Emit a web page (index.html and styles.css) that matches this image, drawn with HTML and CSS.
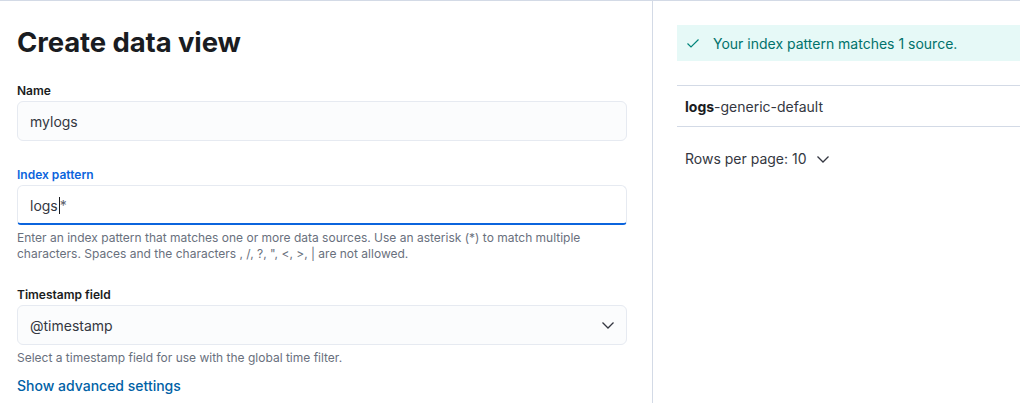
FILE: index.html
```html
<!DOCTYPE html>
<html>
<head>
<meta charset="utf-8">
<link rel="stylesheet" href="styles.css">
</head>
<body>
<div class="page">
  <section class="left">
    <h1 class="title">Create data view</h1>
    <div class="field">
      <label class="label">Name</label>
      <div class="input">mylogs</div>
    </div>
    <div class="field">
      <label class="label label-active">Index pattern</label>
      <div class="input input-focus">logs<span class="caret"></span><span class="ghost">*</span></div>
      <p class="help">Enter an index pattern that matches one or more data sources. Use an asterisk (*) to match multiple characters. Spaces and the characters , /, ?, ", &lt;, &gt;, | are not allowed.</p>
    </div>
    <div class="field">
      <label class="label">Timestamp field</label>
      <div class="input select">
        <span>@timestamp</span>
        <svg class="chev" width="16" height="16" viewBox="0 0 16 16"><path d="M2.5 5.5 L8 11 L13.5 5.5" fill="none" stroke="#343741" stroke-width="1.3"/></svg>
      </div>
      <p class="help">Select a timestamp field for use with the global time filter.</p>
    </div>
    <a class="link">Show advanced settings</a>
  </section>
  <section class="right">
    <div class="callout">
      <svg class="check" width="16" height="16" viewBox="0 0 16 16"><path d="M2.5 8.5 L6 12 L13.5 4.5" fill="none" stroke="#00857a" stroke-width="1.2"/></svg>
      <span>Your index pattern matches 1 source.</span>
    </div>
    <div class="table">
      <div class="row"><b>logs</b>-generic-default</div>
    </div>
    <div class="pager">
      <span>Rows per page: 10</span>
      <svg width="16" height="16" viewBox="0 0 16 16"><path d="M2.5 5.5 L8 11 L13.5 5.5" fill="none" stroke="#343741" stroke-width="1.3"/></svg>
    </div>
  </section>
</div>
</body>
</html>
```

FILE: styles.css
```css
* { box-sizing: border-box; }
html, body { margin: 0; padding: 0; background: #fff; }
body {
  font-family: Inter, "Noto Sans", sans-serif;
  color: #343741;
  font-size: 14px;
}
.page {
  display: flex;
  border-top: 1px solid #d3dae6;
  height: 403px;
}
.left {
  width: 653px;
  flex: none;
  border-right: 1px solid #d3dae6;
  padding: 21px 25px 0 17px;
}
.title {
  margin: 0;
  font-size: 27.5px;
  line-height: 40px;
  font-weight: 700;
  color: #1a1c21;
  letter-spacing: -0.1px;
}
.field { margin-top: 19px; }
.field + .field { margin-top: 24px; }
.label {
  display: block;
  font-size: 12px;
  line-height: 20px;
  font-weight: 600;
  color: #1a1c21;
}
.label-active { color: #0b64dd; }
.input {
  height: 40px;
  border: 1px solid #e6eaf1;
  border-radius: 6px;
  background: #fbfcfd;
  padding: 0 12px;
  display: flex;
  align-items: center;
  font-size: 14px;
  color: #343741;
}
.input-focus {
  background: #fff;
  border-bottom: 2px solid #0b64dd;
  border-radius: 6px 6px 4px 4px;
  padding-top: 1px;
}
.caret {
  display: inline-block;
  width: 1px;
  height: 17px;
  background: #1a1c21;
  margin: 0 0 0 1px;
}
.ghost { color: #5a606b; }
.select { justify-content: space-between; padding-right: 10px; }
.chev { flex: none; }
.help {
  margin: 5px 0 0;
  font-size: 12px;
  line-height: 15.5px;
  color: #69707d;
}
.link {
  display: block;
  margin-top: 10px;
  font-size: 14px;
  line-height: 20px;
  font-weight: 500;
  color: #0061a6;
}
.right {
  flex: 1;
  padding: 24px 0 0 24px;
}
.callout {
  height: 36px;
  background: #e6f9f7;
  display: flex;
  align-items: center;
  padding-left: 8px;
  gap: 12px;
  color: #00726b;
  font-size: 14px;
}
.table {
  margin-top: 24px;
  border-top: 1px solid #d3dae6;
  border-bottom: 1px solid #d3dae6;
}
.row {
  height: 40px;
  display: flex;
  align-items: center;
  padding-left: 8px;
  font-size: 14px;
  color: #343741;
}
.row b { font-weight: 700; color: #1a1c21; }
.pager {
  margin-top: 20px;
  padding-left: 8px;
  display: flex;
  align-items: center;
  gap: 8px;
  font-size: 14px;
  line-height: 24px;
}
```
